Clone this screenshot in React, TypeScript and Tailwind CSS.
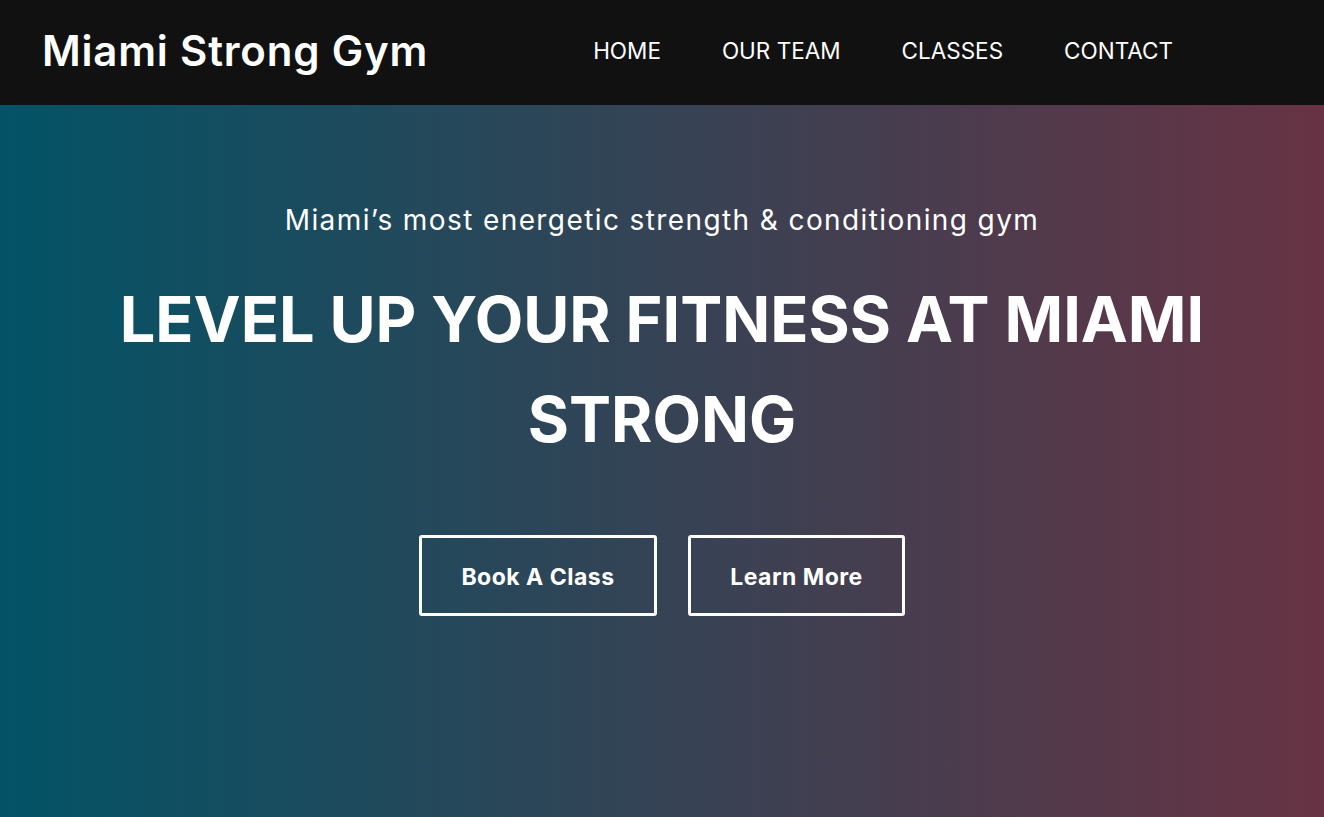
export default function App() {
  const links = ["HOME", "OUR TEAM", "CLASSES", "CONTACT"];
  return (
    <div className="min-h-screen flex flex-col font-['Inter',sans-serif] text-white">
      <header className="h-[105px] bg-[#111111] flex items-center justify-between pl-[42px] pr-[151px] pb-[4px]">
        <h1 className="text-[42px] font-semibold tracking-[0.8px]">Miami Strong Gym</h1>
        <nav className="flex gap-[61px]">
          {links.map((l) => (
            <a key={l} href="#" className="text-[22.5px] font-normal">
              {l}
            </a>
          ))}
        </nav>
      </header>

      <section className="h-[712px] bg-[linear-gradient(to_right,#035366,#673344)] flex flex-col items-center pt-[96px] text-center">
        <p className="text-[28px] leading-[38px] tracking-[1.4px]">Miami’s most energetic strength &amp; conditioning gym</p>
        <h2 className="mt-[30px] text-[63px] leading-[100px] font-bold max-w-[1120px]">
          LEVEL UP YOUR FITNESS AT MIAMI STRONG
        </h2>
        <div className="mt-[66px] flex gap-[31px]">
          <button className="w-[238px] h-[81px] pt-[3px] border-[3px] border-white rounded-[3px] text-[23px] font-bold tracking-[0.5px]">
            Book A Class
          </button>
          <button className="w-[217px] h-[81px] pt-[3px] border-[3px] border-white rounded-[3px] text-[23px] font-bold tracking-[0.5px]">
            Learn More
          </button>
        </div>
      </section>
    </div>
  );
}
